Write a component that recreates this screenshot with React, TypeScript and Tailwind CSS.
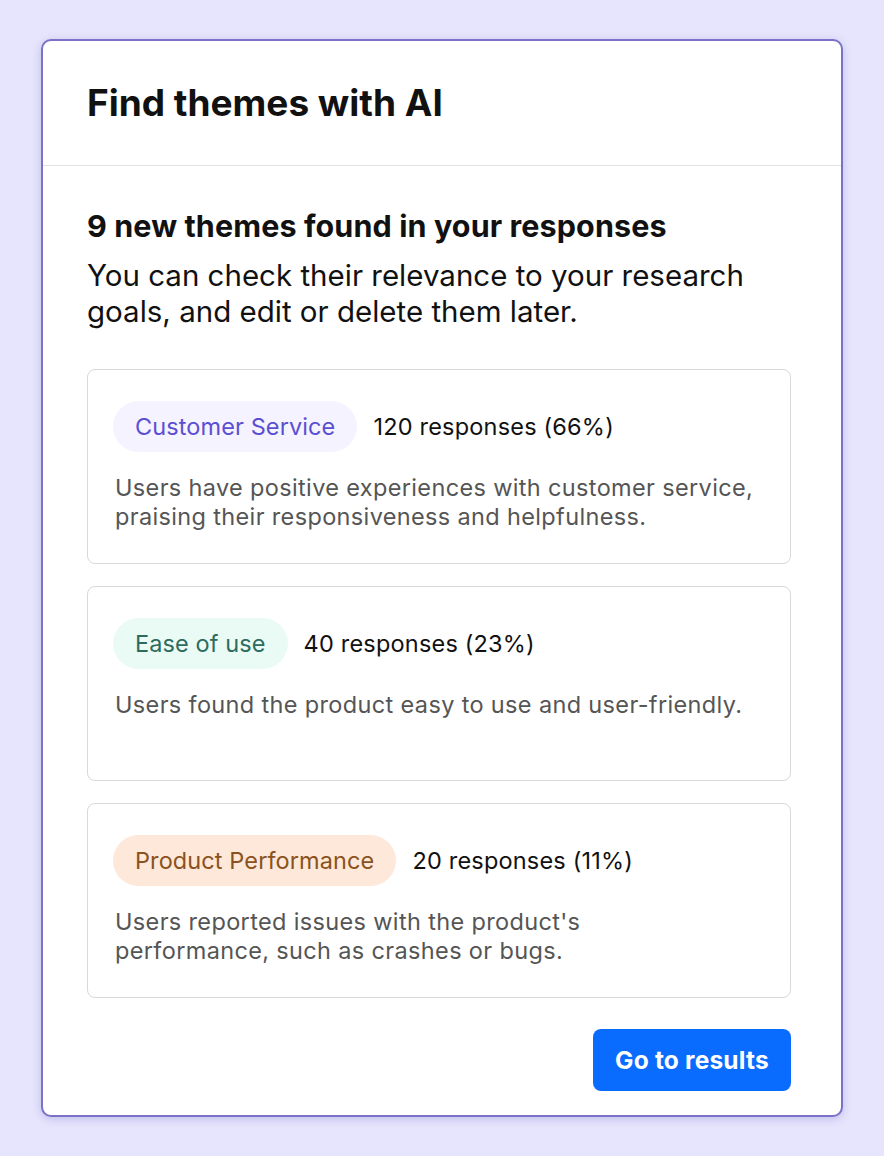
import React from 'react';

const themes = [
    {
        label: 'Customer Service',
        pill: 'bg-[#f5f3ff] text-[#5b4fd1]',
        count: '120 responses (66%)',
        lines: ['Users have positive experiences with customer service,', 'praising their responsiveness and helpfulness.'],
    },
    {
        label: 'Ease of use',
        pill: 'bg-[#eafbf5] text-[#2d6b5e]',
        count: '40 responses (23%)',
        lines: ['Users found the product easy to use and user-friendly.'],
    },
    {
        label: 'Product Performance',
        pill: 'bg-[#fde8d9] text-[#8a5220]',
        count: '20 responses (11%)',
        lines: ["Users reported issues with the product's", 'performance, such as crashes or bugs.'],
    },
];

function ThemeCard(props: { label: string; pill: string; count: string; lines: string[] }) {
    return (
        <div className="h-[195px] rounded-lg border border-[#d9d9d9] bg-white px-[25px] pt-[31px]">
            <div className="flex items-center gap-[16px]">
                <span className={`flex h-[51px] items-center rounded-full px-[22px] text-[23.5px] tracking-[0.1px] ${props.pill}`}>
                    {props.label}
                </span>
                <span className="text-[23.5px] tracking-[0.2px] text-[#111]">{props.count}</span>
            </div>
            <p className="mt-[21px] pl-[2px] text-[23.5px] leading-[29px] tracking-[0.35px] text-[#555]">
                {props.lines.map((l) => (
                    <span key={l} className="block whitespace-nowrap">
                        {l}
                    </span>
                ))}
            </p>
        </div>
    );
}

export default function App() {
    return (
        <div
            className="min-h-[1156px] w-full bg-[#e6e5fd] px-[41px] pt-[39px]"
            style={{ fontFamily: 'Inter, "Noto Sans", sans-serif' }}
        >
            <div className="w-[802px] overflow-hidden rounded-[10px] border-2 border-[#7b72c8] bg-white shadow-[0_2px_8px_rgba(80,70,180,0.25)]">
                <div className="flex h-[125px] items-center border-b border-[#e2e2e2] px-[44px]">
                    <h1 className="text-[37px] font-bold text-[#111]">Find themes with AI</h1>
                </div>
                <div className="pl-[44px] pr-[50px] pt-[42px] pb-[24px]">
                    <h2 className="text-[30.5px] font-bold leading-[36px] tracking-[0.1px] text-[#111]">
                        9 new themes found in your responses
                    </h2>
                    <p className="mt-[13px] text-[29.5px] leading-[36px] text-[#111]">
                        You can check their relevance to your research goals, and edit or delete them later.
                    </p>
                    <div className="mt-[40px] flex flex-col gap-[22px]">
                        {themes.map((t) => (
                            <ThemeCard key={t.label} {...t} />
                        ))}
                    </div>
                    <div className="mt-[31px] flex justify-end">
                        <button className="h-[62px] w-[198px] rounded-lg bg-[#0a6cff] text-[24.5px] font-bold tracking-[0.2px] text-white">
                            Go to results
                        </button>
                    </div>
                </div>
            </div>
        </div>
    );
}
